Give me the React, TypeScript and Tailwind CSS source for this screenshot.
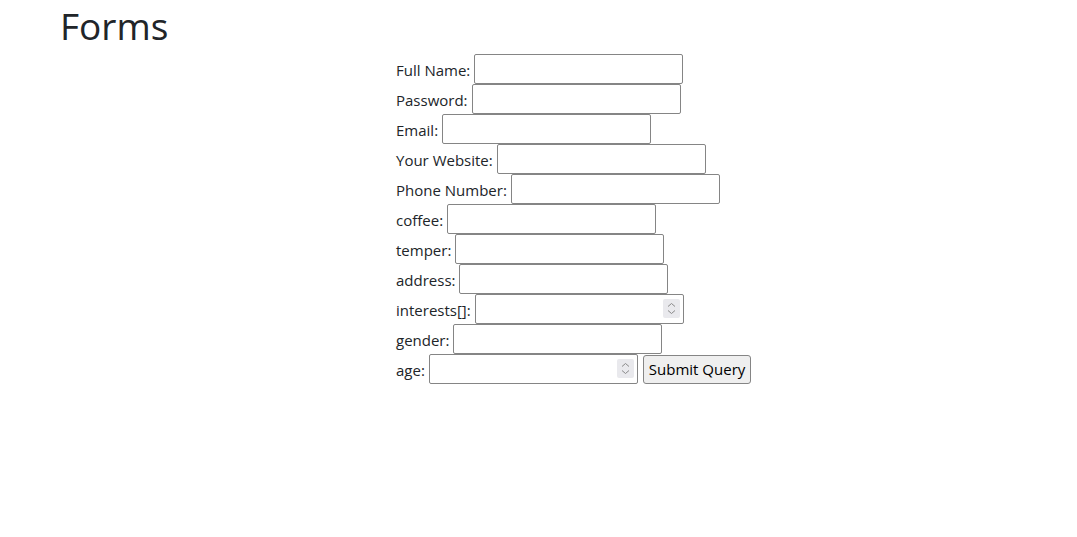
const fields = [
  { label: "Full Name:", type: "text" },
  { label: "Password:", type: "password" },
  { label: "Email:", type: "email" },
  { label: "Your Website:", type: "url" },
  { label: "Phone Number:", type: "tel" },
  { label: "coffee:", type: "text" },
  { label: "temper:", type: "text" },
  { label: "address:", type: "text" },
  { label: "interests[]:", type: "number" },
  { label: "gender:", type: "text" },
];

const Spinner = () => (
  <span className="pointer-events-none absolute right-[4px] top-[5px] flex h-[19px] w-[17px] items-center justify-center rounded-[2px] bg-[#e9e9ed]">
    <svg width="9" height="13" viewBox="0 0 9 13" fill="none" stroke="#8a8a8a" strokeWidth="1">
      <path d="M1 4.5 L4.5 1.5 L8 4.5" />
      <path d="M1 8.5 L4.5 11.5 L8 8.5" />
    </svg>
  </span>
);

const Field = ({ type }: { type: string }) => (
  <span className="relative ml-[4px] inline-block">
    <input
      type={type === "number" ? "text" : type}
      className="h-[30px] w-[209px] rounded-[2px] border border-[#858585] bg-white px-1 align-middle"
    />
    {type === "number" && <Spinner />}
  </span>
);

const App = () => {
  return (
    <div className="min-h-[537px] bg-white font-['Open_Sans',sans-serif] text-[#212529]">
      <h1 className="pl-[60px] pt-[2px] text-[37px] font-normal leading-[48px]">Forms</h1>
      <form className="ml-[396px] mt-[4px] flex flex-col text-[15px]">
        {fields.map((f) => (
          <div key={f.label} className="flex h-[30px] items-center">
            <label className="pt-[2px]">{f.label}</label>
            <Field type={f.type} />
          </div>
        ))}
        <div className="flex h-[30px] items-center">
          <label className="pt-[2px]">age:</label>
          <Field type="number" />
          <button
            type="button"
            className="ml-[5px] h-[29px] rounded-[3px] border border-[#858585] bg-[#efefef] px-[5px] pt-[1px] text-[15px] text-black"
          >
            Submit Query
          </button>
        </div>
      </form>
    </div>
  );
};

export default App;
